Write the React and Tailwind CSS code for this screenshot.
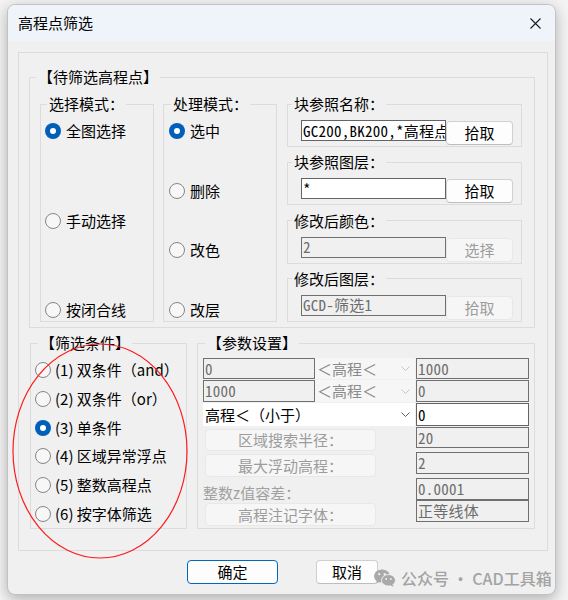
import React from "react";

function Radio({ checked, label, gap = "ml-[5px]" }) {
  return (
    <div className="flex items-center h-[20px]">
      {checked ? (
        <span className="w-4 h-4 rounded-full bg-[#005fb8] flex items-center justify-center shrink-0">
          <span className="w-[6px] h-[6px] rounded-full bg-white" />
        </span>
      ) : (
        <span className="w-4 h-4 rounded-full border border-[#858585] bg-[#f7f7f7] shrink-0" />
      )}
      <span className={"text-[15px] leading-[20px] text-black whitespace-nowrap " + gap}>{label}</span>
    </div>
  );
}

function Group({ title, legendClass, className, children }) {
  return (
    <fieldset className={"border border-[#dcdcdc] min-w-0 p-0 m-0 " + className}>
      <legend className={"text-[15px] leading-[20px] text-black whitespace-nowrap " + legendClass}>{title}</legend>
      {children}
    </fieldset>
  );
}

function Field({ value, disabled, className }) {
  return (
    <div
      className={
        (disabled
          ? "border-[#707070] bg-[#f0f0f0] text-[#6d6d6d] "
          : "border-[#646464] bg-white text-black ") +
        "border flex items-center pl-[1px] overflow-hidden whitespace-nowrap text-[15px] leading-[18px] tracking-[0.25px] font-['Noto_Sans_Mono_CJK_SC','Liberation_Mono',monospace] shrink-0 " +
        className
      }
    >
      {value}
    </div>
  );
}

function Btn({ label, disabled, className }) {
  return (
    <div
      className={
        (disabled
          ? "bg-[#f6f6f6] border-[#e8e8e8] text-[#9c9c9c] "
          : "bg-[#fdfdfd] border-[#d0d0d0] border-b-[#bdbdbd] text-black ") +
        "border rounded-[4px] flex items-center justify-center text-[15px] leading-[20px] whitespace-nowrap shrink-0 " +
        className
      }
    >
      {label}
    </div>
  );
}

function Chevron({ color }) {
  return (
    <svg width="9" height="5" viewBox="0 0 9 5" className="shrink-0">
      <path d="M0.5 0.5 L4.5 4.5 L8.5 0.5" fill="none" stroke={color} strokeWidth="1" />
    </svg>
  );
}

function Combo({ label, disabled, className }) {
  return (
    <div
      className={
        (disabled ? "bg-[#f6f6f6] text-[#8a8a8a] " : "bg-white text-black ") +
        "flex items-center justify-between pl-[2px] pr-[5px] text-[15px] leading-[20px] whitespace-nowrap shrink-0 " +
        className
      }
    >
      <span>{label}</span>
      <Chevron color={disabled ? "#c4c4c4" : "#606060"} />
    </div>
  );
}

function RefGroup({ title, value, btn, disabled }) {
  return (
    <Group title={title} legendClass="ml-[4px] px-[2px]" className="h-[53px]">
      <div className="flex items-start pl-[13px] pt-[6px]">
        <Field value={value} disabled={disabled} className="w-[145px] h-[21px]" />
        <Btn label={btn} disabled={disabled} className="w-[67px] h-[24px] mt-[1px]" />
      </div>
    </Group>
  );
}

function WeChat() {
  return (
    <svg width="22" height="18" viewBox="0 0 22 18">
      <ellipse cx="8" cy="7" rx="8" ry="6.6" fill="#a9a9a9" />
      <path d="M3 11.5 L2.2 14.5 L6 12.5 Z" fill="#a9a9a9" />
      <ellipse cx="14.5" cy="11.3" rx="7" ry="5.8" fill="#a9a9a9" stroke="#f0f0f0" strokeWidth="1" />
      <path d="M18.5 15.5 L19.6 17.8 L16.2 16.4 Z" fill="#a9a9a9" />
      <circle cx="5.2" cy="5.2" r="1.1" fill="#f0f0f0" />
      <circle cx="10.6" cy="5.2" r="1.1" fill="#f0f0f0" />
      <circle cx="12.2" cy="10" r="0.9" fill="#f0f0f0" />
      <circle cx="16.8" cy="10" r="0.9" fill="#f0f0f0" />
    </svg>
  );
}

export default function App() {
  return (
    <div className="relative w-[568px] h-[600px] overflow-hidden bg-[#f3f3f3] pt-[4px] pl-[7px] font-['Noto_Sans_CJK_SC','Noto_Sans',sans-serif]">
      <div className="w-[549px] h-[591px] rounded-[8px] border border-[#c2c2c2] bg-[#f0f0f0] overflow-hidden shadow-[0_4px_14px_rgba(0,0,0,0.28)] flex flex-col">
        {/* title bar */}
        <div className="h-[36px] shrink-0 bg-[#eef4f9] flex items-center justify-between pl-[10px] pr-[14px]">
          <span className="text-[15px] leading-[20px] text-black">高程点筛选</span>
          <svg width="11" height="11" viewBox="0 0 11 11">
            <path d="M0.5 0.5 L10.5 10.5 M10.5 0.5 L0.5 10.5" stroke="#1a1a1a" strokeWidth="1.1" />
          </svg>
        </div>

        {/* body */}
        <div className="flex flex-col">
          <div className="mt-[11px] ml-[10px] w-[530px] h-[499px] border border-[#dcdcdc] flex flex-col">
            {/* top group */}
            <Group title="【待筛选高程点】" legendClass="ml-[6px] px-[2px]" className="ml-[10px] mt-[14px] w-[506px] h-[261px]">
              <div className="flex pl-[10px] pt-[7px]">
                <Group title="选择模式：" legendClass="ml-[6px] px-[2px]" className="w-[114px] h-[228px]">
                  <div className="h-[207px] flex flex-col justify-between pt-[7px] pb-[1px] pl-[4px]">
                    <Radio checked label="全图选择" />
                    <Radio label="手动选择" />
                    <Radio label="按闭合线" />
                  </div>
                </Group>
                <Group title="处理模式：" legendClass="ml-[7px] px-[2px]" className="ml-[9px] w-[114px] h-[228px]">
                  <div className="h-[207px] flex flex-col justify-between pt-[7px] pb-[1px] pl-[5px]">
                    <Radio checked label="选中" />
                    <Radio label="删除" />
                    <Radio label="改色" />
                    <Radio label="改层" />
                  </div>
                </Group>
                <div className="ml-[10px] w-[235px] h-[228px] flex flex-col justify-between">
                  <RefGroup title="块参照名称：" value="GC200,BK200,*高程点" btn="拾取" />
                  <RefGroup title="块参照图层：" value="*" btn="拾取" />
                  <RefGroup title="修改后颜色：" value="2" btn="选择" disabled />
                  <RefGroup title="修改后图层：" value="GCD-筛选1" btn="拾取" disabled />
                </div>
              </div>
            </Group>

            {/* bottom row */}
            <div className="flex ml-[11px] mt-[5px]">
              <Group title="【筛选条件】" legendClass="ml-[7px] px-[2px]" className="w-[157px] h-[196px]">
                <div className="flex flex-col gap-[8.8px] pt-[7px] pl-[4px]">
                  <Radio label="(1) 双条件（and）" gap="ml-[4px]" />
                  <Radio label="(2) 双条件（or）" gap="ml-[4px]" />
                  <Radio checked label="(3) 单条件" gap="ml-[4px]" />
                  <Radio label="(4) 区域异常浮点" gap="ml-[4px]" />
                  <Radio label="(5) 整数高程点" gap="ml-[4px]" />
                  <Radio label="(6) 按字体筛选" gap="ml-[4px]" />
                </div>
              </Group>
              <Group title="【参数设置】" legendClass="ml-[7px] px-[2px]" className="ml-[10px] w-[338px] h-[196px]">
                <div className="flex flex-col pl-[5px] pt-[5px]">
                  <div className="flex h-[21px]">
                    <Field value="0" disabled className="w-[112px] h-[21px]" />
                    <Combo label="＜高程＜" disabled className="w-[100px] h-[21px]" />
                    <Field value="1000" disabled className="ml-[1px] w-[113px] h-[21px]" />
                  </div>
                  <div className="flex h-[22px] mt-[1px]">
                    <Field value="1000" disabled className="w-[112px] h-[22px]" />
                    <Combo label="＜高程＜" disabled className="w-[100px] h-[22px]" />
                    <Field value="0" disabled className="ml-[1px] w-[113px] h-[22px]" />
                  </div>
                  <div className="flex h-[23px] mt-[1px]">
                    <Combo label="高程＜（小于）" className="w-[212px] h-[23px]" />
                    <Field value="0" className="ml-[1px] w-[113px] h-[23px]" />
                  </div>
                  <div className="flex">
                    <div className="w-[212px] flex flex-col">
                      <Btn label="区域搜索半径：" disabled className="ml-[2px] mt-[3px] w-[171px] h-[22px]" />
                      <Btn label="最大浮动高程：" disabled className="ml-[2px] mt-[3px] w-[171px] h-[23px]" />
                      <div className="h-[26px] pt-[6px] flex items-center text-[15px] leading-[20px] text-[#a0a0a0] whitespace-nowrap">整数z值容差：</div>
                      <Btn label="高程注记字体：" disabled className="ml-[2px] w-[171px] h-[23px]" />
                    </div>
                    <div className="ml-[1px] w-[113px] flex flex-col">
                      <Field value="20" disabled className="mt-[1px] w-[113px] h-[21px]" />
                      <Field value="2" disabled className="mt-[4px] w-[113px] h-[22px]" />
                      <Field value="0.0001" disabled className="mt-[4px] w-[113px] h-[22px]" />
                      <Field value="正等线体" disabled className="w-[113px] h-[22px]" />
                    </div>
                  </div>
                </div>
              </Group>
            </div>
          </div>

          {/* buttons */}
          <div className="flex mt-[9px] pl-[179px] gap-[38px]">
            <div className="w-[91px] h-[24px] rounded-[4px] border border-[#0067c0] bg-[#fdfdfd] flex items-center justify-center text-[15px] leading-[20px] text-black">确定</div>
            <Btn label="取消" className="w-[62px] h-[24px]" />
          </div>
        </div>
      </div>

      {/* red hand-drawn ellipse */}
      <svg className="absolute left-0 top-0 pointer-events-none" width="568" height="600" viewBox="0 0 568 600">
        <ellipse cx="100" cy="451" rx="87" ry="107" fill="none" stroke="#ff1a1a" strokeWidth="1.2" />
      </svg>

      {/* watermark */}
      <div className="absolute left-[374px] top-[567px] flex items-center pointer-events-none">
        <WeChat />
        <span className="ml-[5px] text-[16px] leading-[22px] font-medium text-[#a3a3a3] whitespace-nowrap">公众号 · CAD工具箱</span>
      </div>
    </div>
  );
}
